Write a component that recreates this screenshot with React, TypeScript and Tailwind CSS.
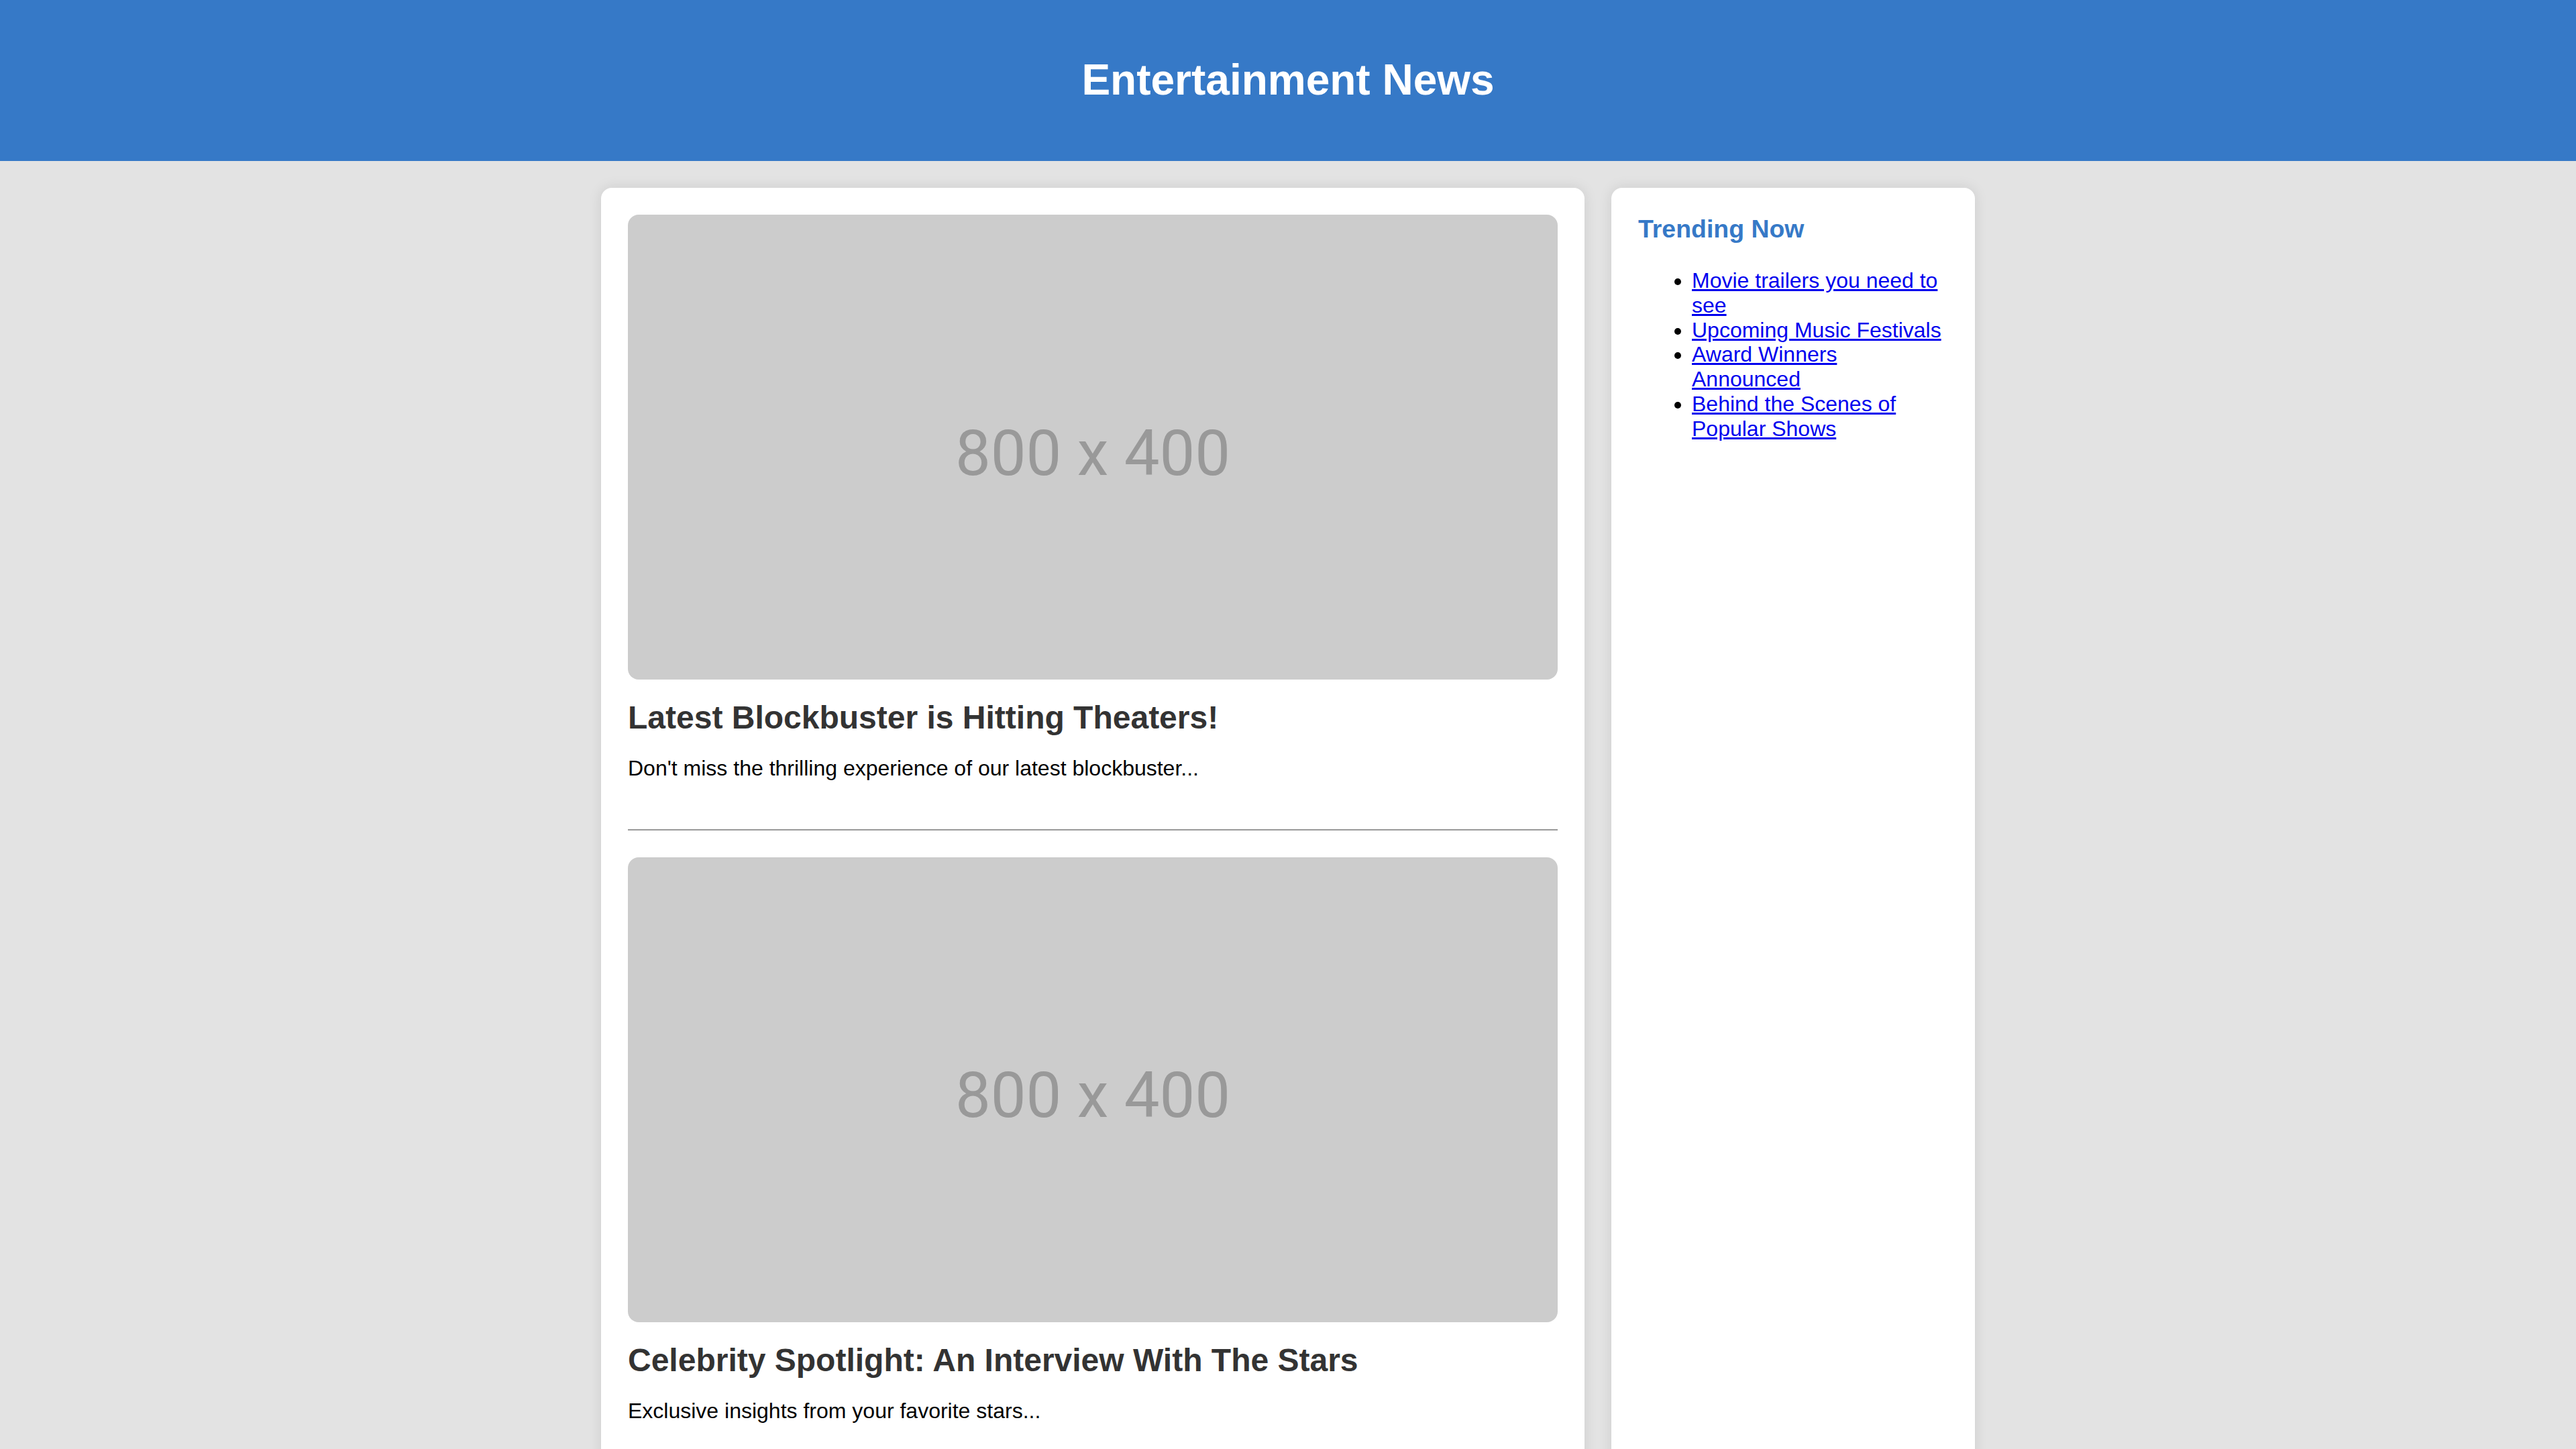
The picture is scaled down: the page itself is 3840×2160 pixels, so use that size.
import React from 'react';

const articles = [
  {
    id: 1,
    title: 'Latest Blockbuster is Hitting Theaters!',
    summary: "Don't miss the thrilling experience of our latest blockbuster...",
  },
  {
    id: 2,
    title: 'Celebrity Spotlight: An Interview With The Stars',
    summary: 'Exclusive insights from your favorite stars...',
  },
];

const trending = [
  'Movie trailers you need to see',
  'Upcoming Music Festivals',
  'Award Winners Announced',
  'Behind the Scenes of Popular Shows',
];

function Placeholder() {
  return (
    <div className="flex h-[693px] w-full items-center justify-center rounded-[16px] bg-[#cccccc] pt-[18px]">
      <span className="font-['Roboto',sans-serif] text-[94px] leading-none text-[#999999]">800 x 400</span>
    </div>
  );
}

export default function App() {
  return (
    <div className="min-h-screen bg-[#e3e3e3] font-['Liberation_Sans',Arial,sans-serif] text-black">
      <header className="flex h-[240px] items-center justify-center bg-[#3679c7]">
        <h1 className="text-[64px] font-bold leading-[1.15] text-white">Entertainment News</h1>
      </header>

      <div className="mx-auto mt-[40px] flex w-[2048px] gap-[40px]">
        <main className="w-[1466px] rounded-[16px] bg-white p-[40px] shadow-[0_0_20px_rgba(0,0,0,0.1)]">
          {articles.map((article) => (
            <article key={article.id} className="mb-[40px] border-b-2 border-[#999999] pb-[40px]">
              <Placeholder />
              <h2 className="mt-[29px] text-[48px] font-bold leading-[1.15] text-[#333333]">{article.title}</h2>
              <p className="mt-[30px] text-[32px] leading-[1.15]">{article.summary}</p>
              <div className="h-[32px]" />
            </article>
          ))}
        </main>

        <aside className="w-[542px] rounded-[16px] bg-white p-[40px] shadow-[0_0_20px_rgba(0,0,0,0.1)]">
          <h3 className="text-[37.44px] font-bold leading-[1.15] text-[#3679c7]">Trending Now</h3>
          <ul className="mt-[37px] list-disc pl-[80px] text-[32px] leading-[1.15]">
            {trending.map((item) => (
              <li key={item}>
                <a href="#" className="text-[#0000ee] underline">
                  {item}
                </a>
              </li>
            ))}
          </ul>
        </aside>
      </div>
    </div>
  );
}
